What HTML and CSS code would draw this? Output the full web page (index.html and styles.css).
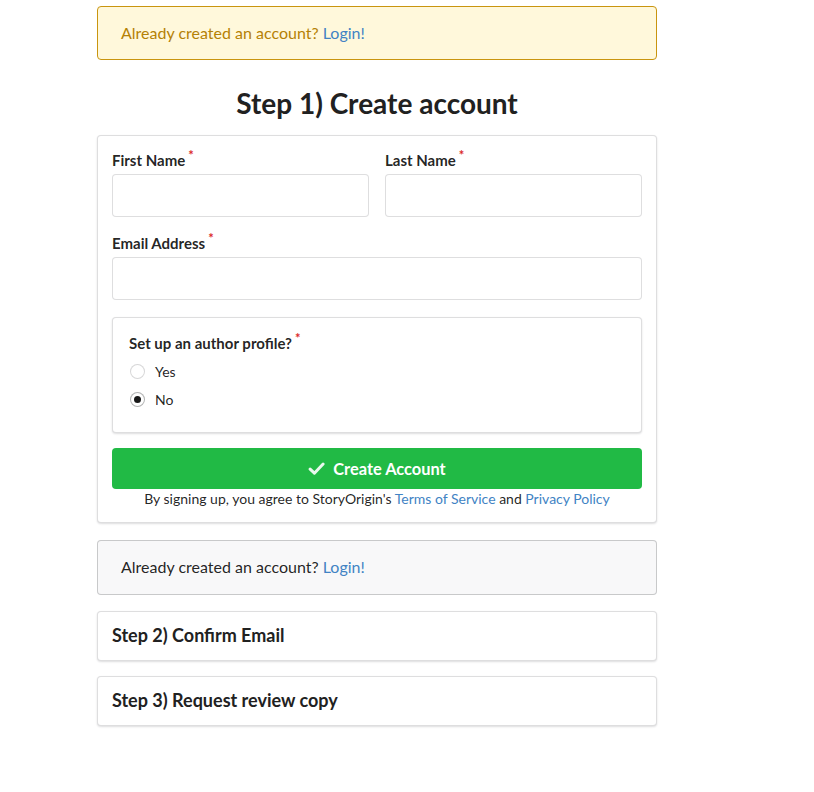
FILE: index.html
```html
<!DOCTYPE html>
<html lang="en">
<head>
<meta charset="utf-8">
<title>Create account</title>
<link rel="stylesheet" href="styles.css">
</head>
<body>
<div class="container">
  <div class="message warning">Already created an account? <a href="#">Login!</a></div>
  <h1 class="title">Step 1) Create account</h1>
  <div class="segment form">
    <div class="fields">
      <div class="field">
        <label class="req">First Name</label>
        <input type="text" class="input">
      </div>
      <div class="field">
        <label class="req">Last Name</label>
        <input type="text" class="input">
      </div>
    </div>
    <div class="field">
      <label class="req">Email Address</label>
      <input type="text" class="input">
    </div>
    <div class="segment inner">
      <label class="req">Set up an author profile?</label>
      <div class="radio"><span class="circle"></span>Yes</div>
      <div class="radio"><span class="circle checked"></span>No</div>
    </div>
    <button class="btn"><svg class="check" viewBox="0 0 16 16" width="17" height="17"><path d="M2 8.6 L6 12.4 L14.2 3.8" fill="none" stroke="#fff" stroke-width="2.8" stroke-linecap="round" stroke-linejoin="round" opacity="0.9"/></svg>Create Account</button>
    <p class="terms">By signing up, you agree to StoryOrigin's <a href="#">Terms of Service</a> and <a href="#">Privacy Policy</a></p>
  </div>
  <div class="message grey">Already created an account? <a href="#">Login!</a></div>
  <div class="segment step first"><h3>Step 2) Confirm Email</h3></div>
  <div class="segment step second"><h3>Step 3) Request review copy</h3></div>
</div>
</body>
</html>
```
FILE: styles.css
```css
* { box-sizing: border-box; }
html, body { margin: 0; padding: 0; background: #fff; }
body {
  font-family: Lato, "Helvetica Neue", Arial, sans-serif;
  font-size: 14px;
  color: rgba(0,0,0,0.87);
}
a { color: #4183c4; text-decoration: none; }
.container {
  width: 560px;
  margin-left: 97px;
  padding-top: 6px;
  padding-bottom: 60px;
}
.message {
  font-size: 16px;
  line-height: 22px;
  padding: 15px 23px;
  border-radius: 4px;
}
.message.warning {
  background: #fff8db;
  color: #b58105;
  border: 1px solid #c9950f;
}
.message.grey {
  background: #f8f8f9;
  color: rgba(0,0,0,0.87);
  border: 1px solid rgba(34,36,38,0.22);
  margin-top: 17px;
  padding-bottom: 16px;
}
.title {
  margin: 0;
  height: 75px;
  padding-top: 26px;
  text-align: center;
  font-size: 28px;
  line-height: 34px;
  font-weight: 700;
  color: #212121;
}
.segment {
  background: #fff;
  border: 1px solid rgba(34,36,38,0.15);
  box-shadow: 0 1px 2px 0 rgba(34,36,38,0.15);
  border-radius: 4px;
}
.segment.form {
  padding: 14px 14px 14px;
}
.fields {
  display: flex;
  gap: 16px;
}
.fields .field { flex: 1; }
.field { margin-bottom: 16px; }
label {
  display: block;
  font-size: 15px;
  font-weight: 700;
  line-height: 20px;
  margin-bottom: 4px;
  color: rgba(0,0,0,0.87);
}
label.req::after {
  content: "*";
  color: #db2828;
  margin-left: 3px;
  font-size: 13px;
  line-height: 1;
  vertical-align: top;
  position: relative;
  top: -1px;
}
.input {
  display: block;
  width: 100%;
  height: 43px;
  border: 1px solid rgba(34,36,38,0.15);
  border-radius: 4px;
  font-family: inherit;
  font-size: 16px;
  padding: 0 14px;
  outline: none;
  background: #fff;
}
.field:last-of-type { margin-bottom: 0; }
.segment.inner {
  margin-top: 17px;
  padding: 15px 16px 15px;
  height: 116px;
}
.segment.inner label { margin-bottom: 4px; }
.radio {
  display: flex;
  align-items: center;
  height: 28px;
  font-size: 14px;
  padding-left: 1px;
}
.circle {
  width: 15px;
  height: 15px;
  border-radius: 50%;
  border: 1px solid rgba(34,36,38,0.18);
  margin-right: 10px;
  display: inline-flex;
  align-items: center;
  justify-content: center;
  background: #fff;
}
.circle.checked { border-color: rgba(34,36,38,0.35); }
.circle.checked::after {
  content: "";
  width: 7px;
  height: 7px;
  border-radius: 50%;
  background: rgba(0,0,0,0.9);
}
.btn {
  margin-top: 15px;
  width: 100%;
  height: 41px;
  border: none;
  border-radius: 4px;
  background: #21ba45;
  color: #fff;
  font-family: inherit;
  font-size: 16.4px;
  font-weight: 700;
  display: flex;
  align-items: center;
  justify-content: center;
  gap: 8px;
  cursor: pointer;
}
.check { margin-top: -1px; }
.terms {
  margin: 0;
  text-align: center;
  font-size: 14px;
  line-height: 19px;
  color: rgba(0,0,0,0.87);
}
.segment.step {
  padding: 13px 14px;
  height: 50px;
}
.segment.step.first { margin-top: 16px; }
.segment.step.second { margin-top: 15px; height: 50px; }
.segment.step h3 {
  margin: 0;
  font-size: 18px;
  line-height: 20px;
  font-weight: 700;
  color: #212121;
}
```
